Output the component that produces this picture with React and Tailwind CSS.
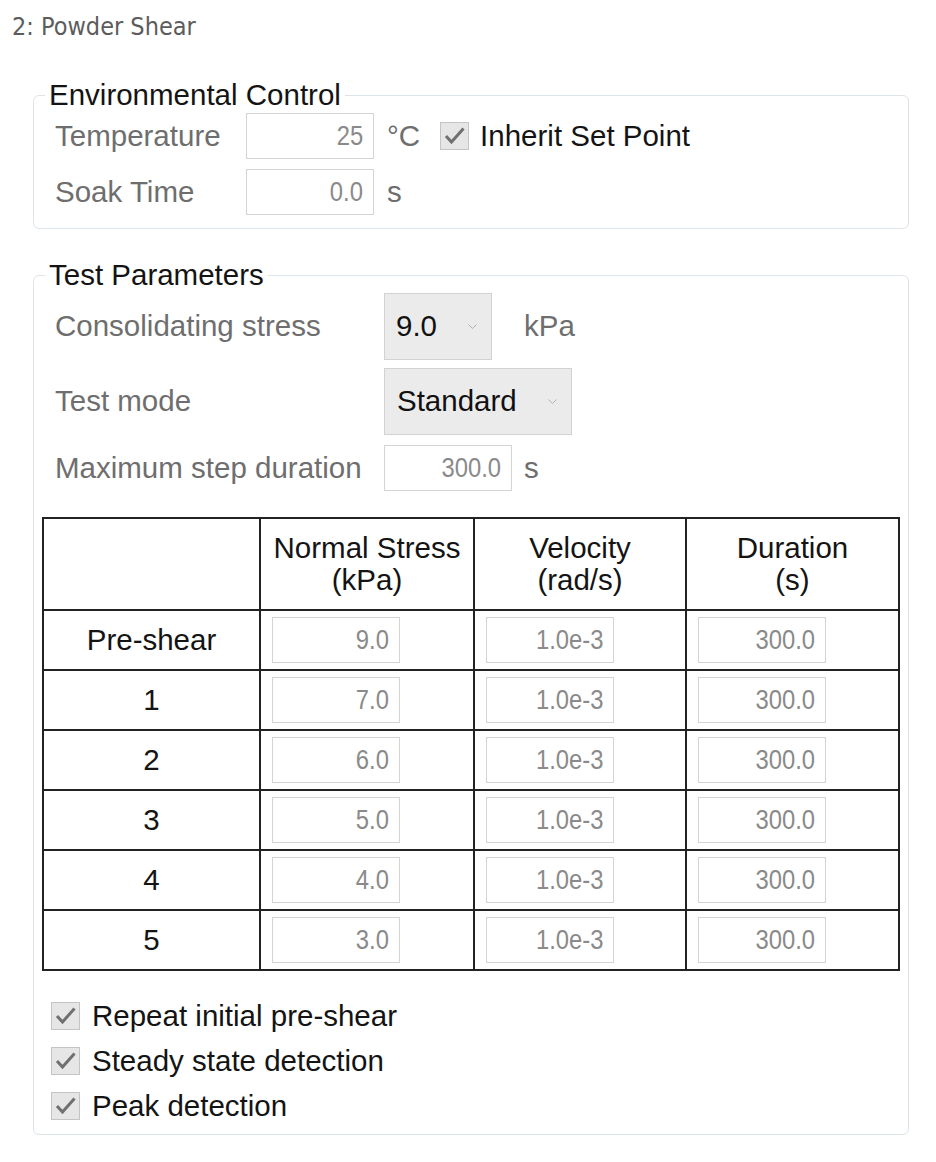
import React from 'react'

const MAIN = '[font-family:Liberation_Sans,Arial,sans-serif]'

const ROWS = [
  { label: 'Pre-shear', stress: '9.0' },
  { label: '1', stress: '7.0' },
  { label: '2', stress: '6.0' },
  { label: '3', stress: '5.0' },
  { label: '4', stress: '4.0' },
  { label: '5', stress: '3.0' },
]

// read-only numeric box; the narrow look comes from squeezing Liberation Sans
function Field({ value }) {
  return (
    <div className="flex h-[46px] w-[128px] items-center justify-end border border-[#d5d5d5] bg-white pr-[10px] text-[28px] leading-none text-[#8a8a8a]">
      <span className="origin-right scale-x-[0.85] whitespace-nowrap">{value}</span>
    </div>
  )
}

function Check() {
  return (
    <span className="block h-[28px] w-[29px] shrink-0 border border-[#c4c4c4] bg-[#e6e6e6]">
      <svg width="27" height="26" viewBox="0 0 27 26">
        <path d="M5 13 L10.5 19 L22.5 5.5" fill="none" stroke="#707070" strokeWidth="3" />
      </svg>
    </span>
  )
}

function Chevron() {
  return (
    <svg width="9" height="6" viewBox="0 0 9 6" className="shrink-0">
      <path d="M0.5 0.5 L4.5 4.5 L8.5 0.5" fill="none" stroke="#b0b0b0" strokeWidth="1" />
    </svg>
  )
}

function Select({ value, width, textPad }) {
  return (
    <div
      className={`flex h-[67px] items-center justify-between border border-[#d2d2d2] bg-[#ebebeb] pr-[14px] text-[29.5px] text-[#111] ${width} ${textPad}`}
    >
      <span>{value}</span>
      <Chevron />
    </div>
  )
}

function Group({ title, className, children }) {
  return (
    <fieldset className={`w-[876px] rounded-[6px] border border-[#dce3e9] ${className}`}>
      <legend className="ml-[11px] px-[4px] text-[29.5px] leading-[34px] text-[#141414]">{title}</legend>
      {children}
    </fieldset>
  )
}

export default function App() {
  return (
    <div className={`min-h-[1162px] w-[936px] bg-white ${MAIN}`}>
      <div className="pl-[12px] pt-[12px] [font-family:DejaVu_Sans_Condensed,DejaVu_Sans,sans-serif] text-[25px] leading-[30px] text-[#5c5c5c] [font-stretch:condensed]">
        2: Powder Shear
      </div>

      <div className="ml-[33px] mt-[36px]">
        <Group title="Environmental Control" className="pb-[13px]">
          <div className="flex flex-col gap-[10px] pl-[21px] pt-[1px]">
            <div className="flex items-center">
              <span className="w-[191px] text-[29.5px] text-[#6e6e6e]">Temperature</span>
              <Field value="25" />
              <span className="ml-[13px] text-[29.5px] text-[#6e6e6e]">°C</span>
              <span className="ml-[20px]"><Check /></span>
              <span className="ml-[11px] text-[29.5px] text-[#141414]">Inherit Set Point</span>
            </div>
            <div className="flex items-center">
              <span className="w-[191px] text-[29.5px] text-[#6e6e6e]">Soak Time</span>
              <Field value="0.0" />
              <span className="ml-[13px] text-[29.5px] text-[#6e6e6e]">s</span>
            </div>
          </div>
        </Group>

        <Group title="Test Parameters" className="mt-[29px] pb-[14px]">
          <div className="flex flex-col pl-[21px] pt-[1px]">
            <div className="flex items-center">
              <span className="w-[329px] text-[29.5px] text-[#6e6e6e]">Consolidating stress</span>
              <Select value="9.0" width="w-[108px]" textPad="pl-[11px]" />
              <span className="ml-[32px] text-[29.5px] text-[#6e6e6e]">kPa</span>
            </div>
            <div className="mt-[8px] flex items-center">
              <span className="w-[329px] text-[29.5px] text-[#6e6e6e]">Test mode</span>
              <Select value="Standard" width="w-[188px]" textPad="pl-[12px]" />
            </div>
            <div className="mt-[10px] flex items-center">
              <span className="w-[329px] text-[29.5px] text-[#6e6e6e]">Maximum step duration</span>
              <Field value="300.0" />
              <span className="ml-[12px] text-[29.5px] text-[#6e6e6e]">s</span>
            </div>
          </div>

          <table className="ml-[8px] mt-[26px] w-[856px] table-fixed border-collapse text-[29.5px] text-[#141414]">
            <colgroup>
              <col className="w-[217px]" />
              <col className="w-[214px]" />
              <col className="w-[212px]" />
              <col className="w-[213px]" />
            </colgroup>
            <thead>
              <tr className="h-[92px]">
                <th className="border-2 border-[#222]" />
                <th className="border-2 border-[#222] font-normal leading-[32px]">Normal Stress<br />(kPa)</th>
                <th className="border-2 border-[#222] font-normal leading-[32px]">Velocity<br />(rad/s)</th>
                <th className="border-2 border-[#222] font-normal leading-[32px]">Duration<br />(s)</th>
              </tr>
            </thead>
            <tbody>
              {ROWS.map((r) => (
                <tr key={r.label} className="h-[60px]">
                  <td className="border-2 border-[#222] text-center">{r.label}</td>
                  <td className="border-2 border-[#222] pl-[11px]"><Field value={r.stress} /></td>
                  <td className="border-2 border-[#222] pl-[11px]"><Field value="1.0e-3" /></td>
                  <td className="border-2 border-[#222] pl-[11px]"><Field value="300.0" /></td>
                </tr>
              ))}
            </tbody>
          </table>

          <div className="mt-[31px] flex flex-col gap-[17px] pl-[17px]">
            {['Repeat initial pre-shear', 'Steady state detection', 'Peak detection'].map((t) => (
              <div key={t} className="flex h-[28px] items-center">
                <Check />
                <span className="ml-[12px] text-[29.5px] leading-none text-[#141414]">{t}</span>
              </div>
            ))}
          </div>
        </Group>
      </div>
    </div>
  )
}
